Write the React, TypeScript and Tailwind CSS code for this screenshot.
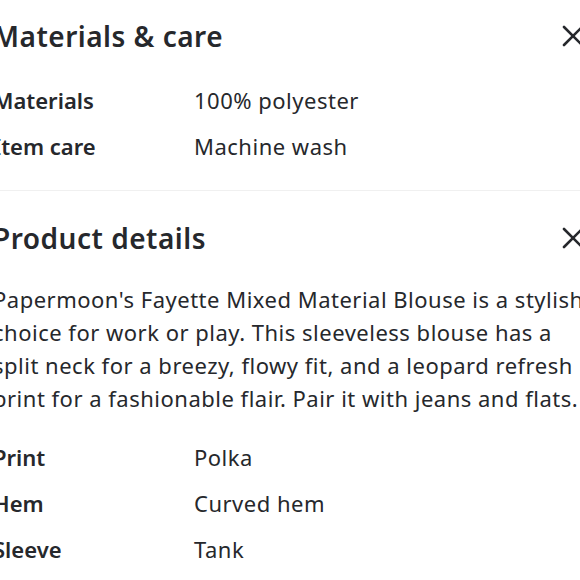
const font = { fontFamily: '"Noto Sans", Lato, sans-serif' };

function CloseIcon() {
  return (
    <svg width="22" height="22" viewBox="0 0 22 22" fill="none" stroke="currentColor" strokeWidth="2.6" strokeLinecap="round">
      <line x1="2" y1="2" x2="20" y2="20" />
      <line x1="20" y1="2" x2="2" y2="20" />
    </svg>
  );
}

function Row({ label, value }: { label: string; value: string }) {
  return (
    <div className="flex h-[46px] items-center text-[22px]">
      <div className="w-[201px] shrink-0 font-semibold">{label}</div>
      <div className="font-normal tracking-[0.5px]">{value}</div>
    </div>
  );
}

function Header({ title }: { title: string }) {
  return (
    <div className="flex h-[36px] items-center justify-between">
      <h2 className="text-[28px] font-semibold tracking-[0.5px]">{title}</h2>
      <div className="pr-[9px]"><CloseIcon /></div>
    </div>
  );
}

export default function App() {
  const lines = [
    "Papermoon's Fayette Mixed Material Blouse is a stylish",
    'choice for work or play. This sleeveless blouse has a',
    'split neck for a breezy, flowy fit, and a leopard refresh',
    'print for a fashionable flair. Pair it with jeans and flats.',
  ];

  return (
    <div className="h-[580px] w-[580px] overflow-hidden bg-white text-[#26282c]" style={font}>
      <div className="-ml-[7px] w-[600px]">
        <section className="pt-[18px] pb-[21px]">
          <Header title="Materials & care" />
          <div className="mt-[23px]">
            <Row label="Materials" value="100% polyester" />
            <Row label="Item care" value="Machine wash" />
          </div>
        </section>
        <div className="h-px bg-[#f0f0f0]" />
        <section className="pt-[29px]">
          <Header title="Product details" />
          <p className="mt-[27px] text-[22px] leading-[33px] tracking-[0.5px] whitespace-nowrap">
            {lines.map(l => (
              <span key={l} className="block">{l}</span>
            ))}
          </p>
          <div className="mt-[19px]">
            <Row label="Print" value="Polka" />
            <Row label="Hem" value="Curved hem" />
            <Row label="Sleeve" value="Tank" />
          </div>
        </section>
      </div>
    </div>
  );
}
